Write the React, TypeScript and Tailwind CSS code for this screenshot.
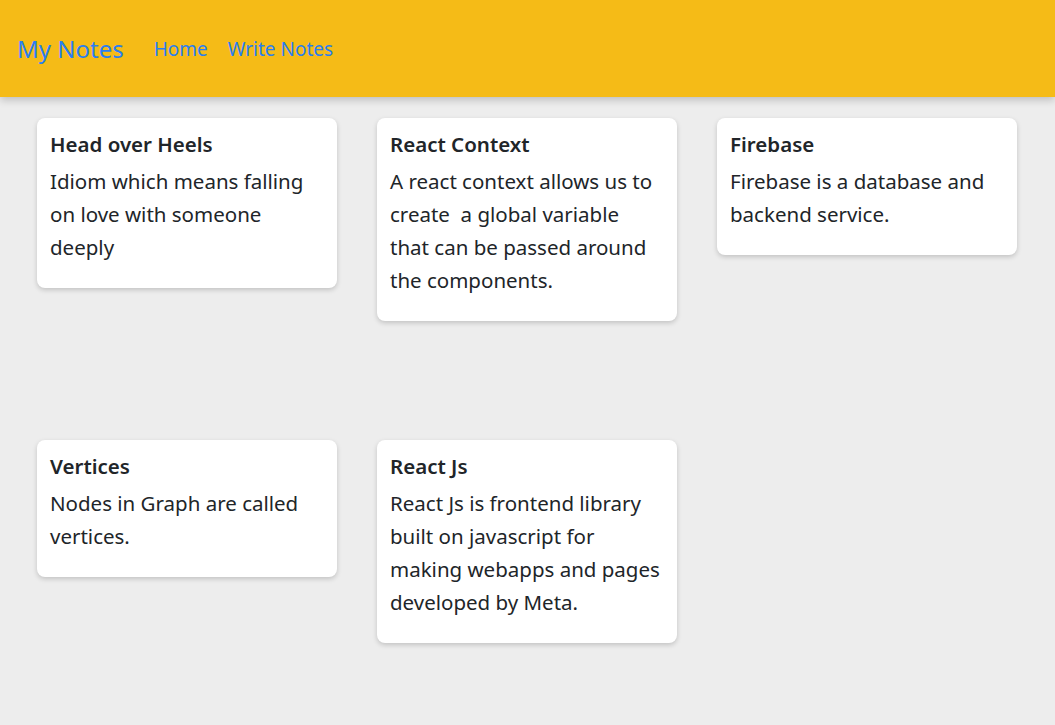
import React from 'react';

type Note = { title: string; body: string };

const notes: Note[] = [
  { title: 'Head over Heels', body: 'Idiom which means falling on love with someone deeply' },
  { title: 'React Context', body: 'A react context allows us to create \u00a0a global variable that can be passed around the components.' },
  { title: 'Firebase', body: 'Firebase is a database and backend service.' },
  { title: 'Vertices', body: 'Nodes in Graph are called vertices.' },
  { title: 'React Js', body: 'React Js is frontend library built on javascript for making webapps and pages developed by Meta.' },
];

function NoteCard({ note }: { note: Note }) {
  return (
    <div className="bg-white rounded-lg shadow-[0_2px_5px_rgba(0,0,0,0.18)] pl-[13px] pr-[15px] pt-[12px] pb-[24px]">
      <h2 className="text-[20.5px] leading-[28px] font-semibold text-[#212529] mb-[7px]">{note.title}</h2>
      <p className="text-[20.5px] leading-[33px] text-[#212529]">{note.body}</p>
    </div>
  );
}

export default function App() {
  return (
    <div className="min-h-[725px] bg-[#ededed] font-['Noto_Sans',sans-serif]">
      <nav className="h-[97px] bg-[#f5bb17] shadow-[0_3px_8px_rgba(0,0,0,0.2)] flex items-center px-[17px] gap-[30px] relative">
        <span className="text-[24px] text-[#2a7ef0]">My Notes</span>
        <div className="flex items-center gap-[20px] text-[19px] text-[#2a7ef0] pt-[1px]">
          <a href="#">Home</a>
          <a href="#">Write Notes</a>
        </div>
      </nav>
      <main className="grid grid-cols-[300px_300px_300px] auto-rows-[302px] gap-x-[40px] gap-y-[20px] pl-[37px] pt-[21px] items-start">
        {notes.map((n) => (
          <NoteCard key={n.title} note={n} />
        ))}
      </main>
    </div>
  );
}
